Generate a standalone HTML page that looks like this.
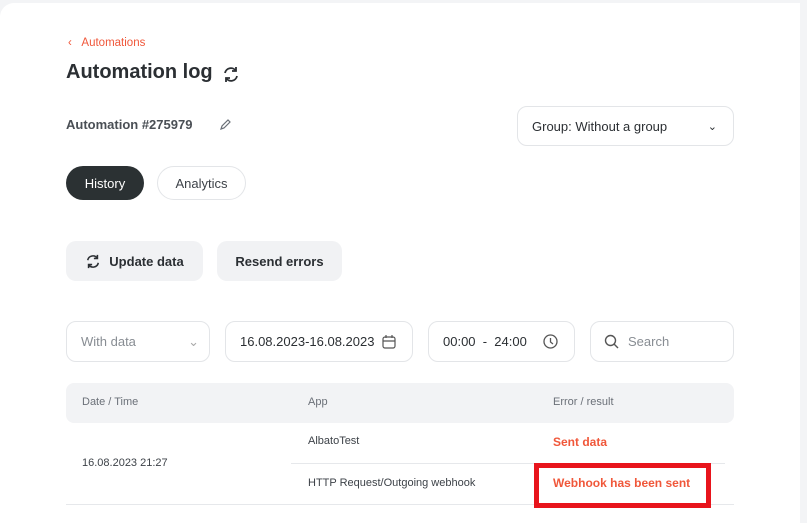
<!DOCTYPE html>
<html><head><meta charset="utf-8"><style>
*{box-sizing:border-box;margin:0;padding:0}
body{width:807px;height:511px;overflow:hidden;background:#f3f4f6;font-family:"Liberation Sans",sans-serif;color:#2b2f33;position:relative}
.card{position:absolute;left:0;top:3px;width:800px;height:520px;background:#fff;border-radius:14px 0 0 0}
.a{position:absolute}
.btn{position:absolute;border-radius:10px;background:#f1f2f4;font-weight:bold;font-size:13px;display:flex;align-items:center;justify-content:center}
.inp{position:absolute;border:1px solid #e3e5e8;border-radius:10px;display:flex;align-items:center;font-size:13px;color:#2b2f33}
</style></head><body>
<div class="card"></div>
<div class="a" style="left:68px;top:37px;color:#f0573a;font-size:11.5px">‹&nbsp;&nbsp;&nbsp;Automations</div>
<div class="a" style="left:66px;top:61px;font-size:20px;font-weight:bold;color:#2b2f33">Automation log</div>
<svg class="a" style="left:222px;top:66px" width="18" height="17" viewBox="0 0 18 17" fill="none" stroke="#2b2f33" stroke-width="1.8"><path d="M3 7a6 6 0 0 1 11-2M15 10a6 6 0 0 1-11 2"/><path d="M14 1v4h-4M4 16v-4h4"/></svg>
<div class="a" style="left:66px;top:117px;font-size:13px;font-weight:bold;color:#4a4f55">Automation #275979</div>
<svg class="a" style="left:219px;top:118px" width="13" height="13" viewBox="0 0 13 13" fill="none" stroke="#6b7078" stroke-width="1.2"><path d="M2 11l1-3 6-6 2 2-6 6z"/></svg>
<div class="inp" style="left:517px;top:106px;width:217px;height:40px;padding-left:14px">Group: Without a group<span style="position:absolute;right:16px;font-size:11px">⌄</span></div>
<div class="btn" style="left:66px;top:166px;width:78px;height:34px;border-radius:17px;background:#2b3133;color:#fff;font-weight:normal">History</div>
<div class="btn" style="left:157px;top:166px;width:89px;height:34px;border-radius:17px;background:#fff;border:1px solid #e3e5e8;font-weight:normal;color:#3d4248">Analytics</div>
<div class="btn" style="left:66px;top:241px;width:137px;height:40px"><svg width="16" height="15" viewBox="0 0 18 17" fill="none" stroke="#2b2f33" stroke-width="1.8" style="margin-right:8px"><path d="M3 7a6 6 0 0 1 11-2M15 10a6 6 0 0 1-11 2"/><path d="M14 1v4h-4M4 16v-4h4"/></svg>Update data</div>
<div class="btn" style="left:217px;top:241px;width:125px;height:40px">Resend errors</div>
<div class="inp" style="left:66px;top:321px;width:144px;height:41px;padding-left:14px;color:#888d93">With data<span style="position:absolute;right:10px;color:#aaa">⌄</span></div>
<div class="inp" style="left:225px;top:321px;width:188px;height:41px;padding-left:14px">16.08.2023-16.08.2023<svg style="position:absolute;right:16px" width="14" height="14" viewBox="0 0 14 14" fill="none" stroke="#555" stroke-width="1.2"><rect x="1" y="2" width="12" height="11" rx="2"/><path d="M1 6h12M4 0v3M10 0v3"/></svg></div>
<div class="inp" style="left:428px;top:321px;width:147px;height:41px;padding-left:14px">00:00&nbsp;&nbsp;-&nbsp;&nbsp;24:00<svg style="position:absolute;right:16px" width="15" height="15" viewBox="0 0 15 15" fill="none" stroke="#555" stroke-width="1.3"><circle cx="7.5" cy="7.5" r="6.5"/><path d="M7.5 4v4l2.5 2"/></svg></div>
<div class="inp" style="left:590px;top:321px;width:144px;height:41px;padding-left:37px;color:#888d93"><svg style="position:absolute;left:13px" width="15" height="15" viewBox="0 0 15 15" fill="none" stroke="#555" stroke-width="1.4"><circle cx="6.5" cy="6.5" r="5"/><path d="M10 10l4 4"/></svg>Search</div>
<div class="a" style="left:66px;top:383px;width:668px;height:40px;background:#f2f3f5;border-radius:8px"></div>
<div class="a" style="left:82px;top:396px;font-size:11px;color:#6b7078">Date / Time</div>
<div class="a" style="left:308px;top:396px;font-size:11px;color:#6b7078">App</div>
<div class="a" style="left:553px;top:396px;font-size:11px;color:#6b7078">Error / result</div>
<div class="a" style="left:308px;top:435px;font-size:11px;color:#3d4248">AlbatoTest</div>
<div class="a" style="left:553px;top:435px;font-size:12px;font-weight:bold;color:#f0573a">Sent data</div>
<div class="a" style="left:82px;top:457px;font-size:11px;color:#3d4248">16.08.2023 21:27</div>
<div class="a" style="left:291px;top:463px;width:434px;height:1px;background:#e6e8eb"></div>
<div class="a" style="left:308px;top:477px;font-size:11px;color:#3d4248">HTTP Request/Outgoing webhook</div>
<div class="a" style="left:553px;top:476px;font-size:12px;font-weight:bold;color:#f0573a">Webhook has been sent</div>
<div class="a" style="left:66px;top:504px;width:668px;height:1px;background:#e6e8eb"></div>
<div class="a" style="left:534px;top:463px;width:177px;height:45px;border:5px solid #e8141c"></div>
</body></html>
